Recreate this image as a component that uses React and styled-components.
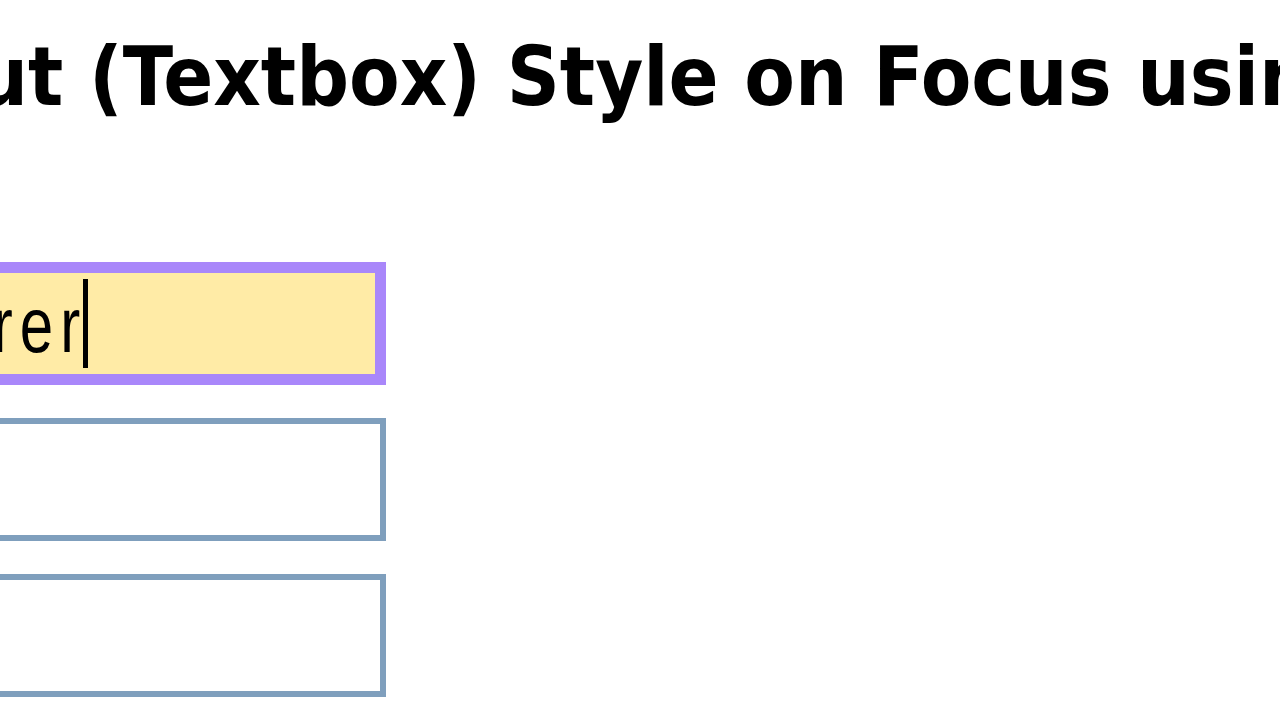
import React from "react"
import styled, { createGlobalStyle } from "styled-components"

const GlobalStyle = createGlobalStyle`
  html, body {
    margin: 0;
    padding: 0;
    background: #fff;
    overflow: hidden;
  }
`

const Page = styled.div`
  width: 1280px;
  height: 720px;
  overflow: hidden;
  display: flex;
  flex-direction: column;
`

const Title = styled.h1`
  margin: 36px 0 0 -495px;
  font-family: "DejaVu Sans", "Liberation Sans", sans-serif;
  font-weight: bold;
  font-size: 82px;
  line-height: 82px;
  color: #000;
  white-space: nowrap;
  transform: scaleX(0.9);
  transform-origin: left center;
`

const Form = styled.div`
  margin: 144px 0 0 -500px;
  display: flex;
  flex-direction: column;
  gap: 33px;
`

const Field = styled.div`
  box-sizing: border-box;
  width: 886px;
  height: 123px;
  display: flex;
  align-items: center;
  background: ${(p) => (p.$focused ? "#ffeba6" : "#fff")};
  border: ${(p) => (p.$focused ? "11px solid #a987fa" : "6px solid #7f9fbd")};
`

const Value = styled.div`
  width: 569px;
  flex: none;
  display: flex;
  justify-content: flex-end;
  white-space: nowrap;
  margin-top: 4px;
`

const Text = styled.span`
  flex: none;
  font-family: "Liberation Sans", Arial, sans-serif;
  font-size: 77px;
  line-height: 77px;
  letter-spacing: 9px;
  color: #000;
  transform: scaleX(0.78);
  transform-origin: right center;
`

const Last = styled.span`
  letter-spacing: 0;
`

const Caret = styled.span`
  width: 5px;
  height: 89px;
  margin-left: 3px;
  background: #000;
`

const App = () => {
  return (
    <Page>
      <GlobalStyle />
      <Title>Change Input (Textbox) Style on Focus using CSS</Title>
      <Form>
        <Field $focused>
          <Value>
            <Text>
              Internet Explore<Last>r</Last>
            </Text>
          </Value>
          <Caret />
        </Field>
        <Field />
        <Field />
      </Form>
    </Page>
  )
}

export default App
